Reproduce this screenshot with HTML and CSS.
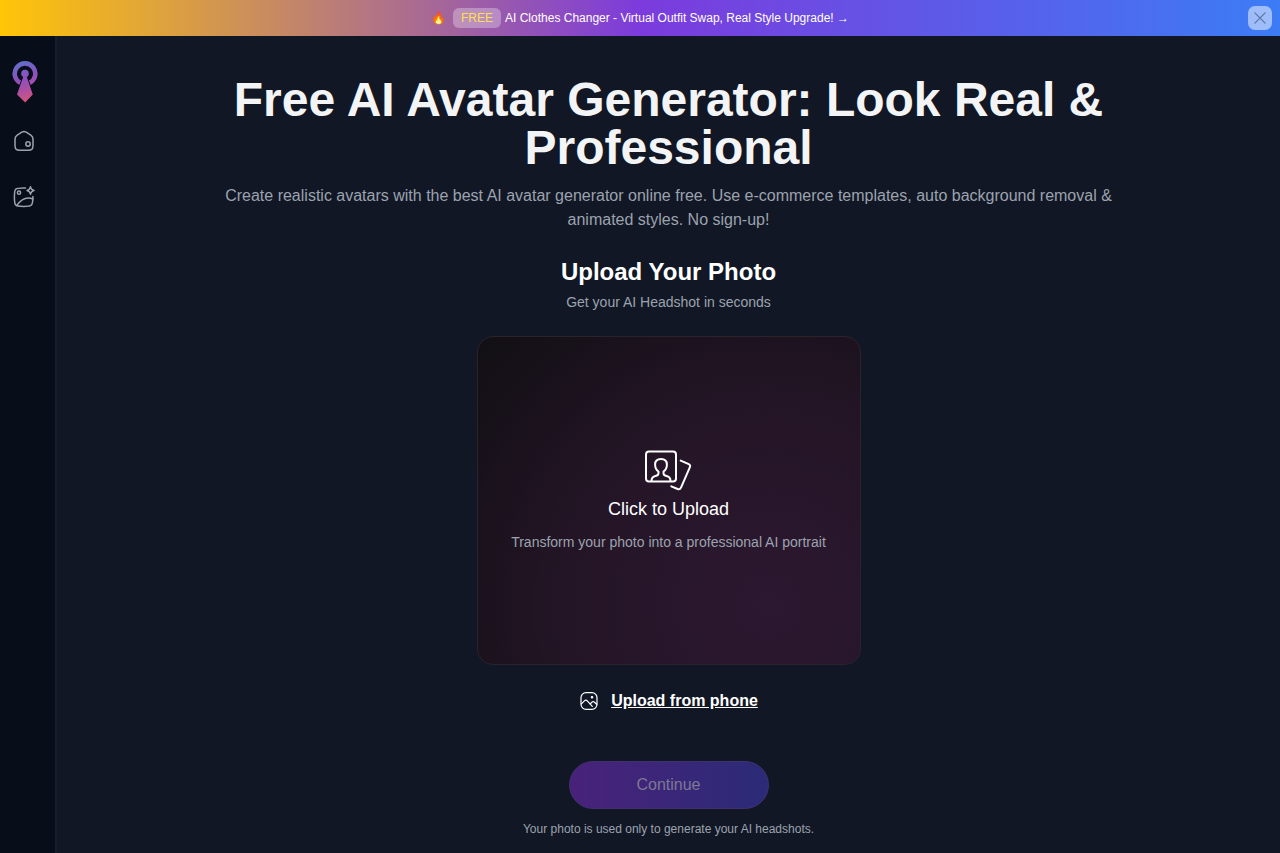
FILE: index.html
```html
<!DOCTYPE html>
<html lang="en">
<head>
<meta charset="utf-8">
<meta name="viewport" content="width=device-width, initial-scale=1">
<title>Free AI Avatar Generator</title>
<link rel="stylesheet" href="styles.css">
</head>
<body>
<div class="banner">
  <a class="banner-link" href="#clothes">
    <span class="fire">🔥</span>
    <span class="tag">FREE</span>
    <span>AI Clothes Changer - Virtual Outfit Swap, Real Style Upgrade! →</span>
  </a>
  <button class="close" type="button" aria-label="Close">
    <svg width="24" height="24" viewBox="0 0 24 24" fill="none" stroke="currentColor" stroke-width="1.3" stroke-linecap="round"><path d="M6.9 6.9l10.2 10.2M17.1 6.9L6.9 17.1"/></svg>
  </button>
</div>
<div class="shell">
  <nav class="sidebar" aria-label="Main">
    <a href="#" class="logo" aria-label="Brand">
      <svg width="28" height="42" viewBox="0 0 28 42">
        <defs><linearGradient id="brand" gradientUnits="userSpaceOnUse" x1="5" y1="2" x2="19" y2="42"><stop offset="0" stop-color="#5f70c8"/><stop offset=".4" stop-color="#8c50bf"/><stop offset=".72" stop-color="#b34f9f"/><stop offset="1" stop-color="#d8566e"/></linearGradient></defs>
        <path d="M10.400 21.900A10.300 10.300 0 1 1 19.600 21.900" fill="none" stroke="url(#brand)" stroke-width="4.600"/>
        <path d="M13.400 15.200L16.600 15.200L22.800 33.600L15.200 41.600L7 33.600Z" fill="url(#brand)" stroke="#080e19" stroke-width="1.600" paint-order="stroke"/>
        <circle cx="15" cy="12.600" r="3.800" fill="url(#brand)"/>
      </svg>
    </a>
    <a href="#home" class="nav-item" aria-label="Home">
      <svg width="24" height="24" viewBox="0 0 24 24" fill="none" stroke="currentColor" stroke-width="1.5" stroke-linejoin="round"><path d="M3 10.300C3 8 3.600 7.200 5.200 6.200L9.800 3.200C11.300 2.300 12.700 2.300 14.200 3.200L18.800 6.200C20.400 7.200 21 8 21 10.300V16C21 20.200 20 21.200 16 21.200H8C4 21.200 3 20.200 3 16Z"/><circle cx="16" cy="15" r="2.200"/></svg>
    </a>
    <a href="#images" class="nav-item" aria-label="Images">
      <svg width="24" height="24" viewBox="0 0 24 24" fill="none" stroke="currentColor" stroke-width="1.5" stroke-linecap="round" stroke-linejoin="round"><path d="M13.500 2.900H11.500C7 2.900 5 2.900 3.700 4.200C2.400 5.500 2.400 7.500 2.400 12S2.400 18.700 3.700 20C5 21.400 7 21.400 11.500 21.400S18 21.400 19.400 20C20.800 18.700 20.900 16.500 20.900 11.500"/><circle cx="7" cy="7.700" r="1.600"/><path d="M4.600 20.600C8.500 15.200 13.500 10.800 20.900 14"/><path d="M18.500 1.800c.4 2.200 1.200 3 3.500 3.700-2.300.6-3 1.400-3.500 3.700-.5-2.300-1.300-3.100-3.500-3.700 2.200-.7 3-1.500 3.500-3.700z"/></svg>
    </a>
  </nav>
  <main class="content">
    <h1>Free AI Avatar Generator: Look Real &amp; Professional</h1>
    <p class="lead">Create realistic avatars with the best AI avatar generator online free. Use e-commerce templates, auto background removal &amp; animated styles. No sign-up!</p>
    <h2>Upload Your Photo</h2>
    <p class="sub">Get your AI Headshot in seconds</p>
    <button class="dropzone" type="button">
      <svg width="48" height="42" viewBox="1 -1 48 42" fill="none" stroke="currentColor" stroke-width="2" stroke-linecap="round" stroke-linejoin="round"><rect x="2" y="1.500" width="30" height="30" rx="3"/><path d="M7.500 31c0-3.300 1-4.500 4-5.100 2.200-.4 3-1 3-2.700v-1.700c-2.300-1.500-3.400-3.900-3.400-7C11.100 11 13.300 9 17 9s5.900 2 5.900 5.500c0 3.100-1.100 5.500-3.400 7v1.700c0 1.700.8 2.300 3 2.700 3 .6 4 1.800 4 5.100"/><path d="M36.700 10.600l7.500 3.200c1.700.7 2.400 1.800 1.600 3.500l-8.700 20c-.8 1.800-1.700 2.300-3.500 1.700l-6.300-2.700"/></svg>
      <span class="drop-title">Click to Upload</span>
      <span class="drop-text">Transform your photo into a professional AI portrait</span>
    </button>
    <a class="phone" href="#phone">
      <svg width="20" height="20" viewBox="0 0 20 20" fill="none" stroke="currentColor" stroke-width="1.2" stroke-linecap="round" stroke-linejoin="round"><rect x="2" y="1.700" width="16" height="16.600" rx="5"/><path d="M2.400 12.800l3-3c1-1 2-.9 2.900.1l5 5.500M11.100 13.200l1.600-1.900c.9-1 1.900-1 2.800-.1l2.200 2.100"/><circle cx="13" cy="6.300" r=".7" fill="currentColor"/></svg>
      <span class="phone-label">Upload from phone</span>
    </a>
    <button class="continue" type="button" disabled>Continue</button>
    <p class="note">Your photo is used only to generate your AI headshots.</p>
  </main>
</div>
</body>
</html>
```
FILE: styles.css
```css
* {
  box-sizing: border-box;
}

body {
  margin: 0;
  min-height: 100vh;
  display: flex;
  flex-direction: column;
  background: #111724;
  color: #fff;
  font: 16px/24px "Liberation Sans", Arial, sans-serif;
}

h1, h2, p {
  margin: 0;
}

button {
  font: inherit;
  cursor: pointer;
}

svg {
  display: block;
  flex: none;
}

.banner {
  display: flex;
  align-items: center;
  height: 36px;
  padding: 0 8px;
  background: linear-gradient(90deg, #ffc507, #7c3bdc 50%, #3c7cf4);
}

.banner-link {
  flex: 1;
  display: flex;
  align-items: center;
  justify-content: center;
  gap: 4px;
  padding-left: 24px;
  color: #fff;
  font-size: 12px;
  line-height: 16px;
  text-decoration: none;
}

.fire {
  margin-right: 3px;
}

.tag {
  padding: 2px 8px;
  border-radius: 6px;
  background: rgba(255, 255, 255, 0.3);
  color: #fde047;
}

.close {
  width: 24px;
  height: 24px;
  padding: 0;
  border: 0;
  border-radius: 7px;
  background: rgba(255, 255, 255, 0.5);
  color: #5e76ab;
}

.shell {
  flex: 1;
  display: flex;
}

.sidebar {
  flex: none;
  display: flex;
  flex-direction: column;
  align-items: center;
  width: 57px;
  padding: 25px 8px 0 0;
  border-right: 2px solid #171d2a;
  background: #080e19;
}

.logo {
  margin-bottom: 26px;
}

.nav-item {
  margin-bottom: 32px;
  color: #9ca3af;
}

.content {
  flex: 1;
  display: flex;
  flex-direction: column;
  align-items: center;
  padding: 40px 16px 16px;
  text-align: center;
}

h1 {
  max-width: 896px;
  margin-bottom: 12px;
  color: #f3f4f6;
  font-size: 48px;
  line-height: 48px;
}

.lead {
  max-width: 896px;
  margin-bottom: 24px;
  color: #9ca3af;
}

h2 {
  margin-bottom: 4px;
  font-size: 24px;
  line-height: 32px;
}

.sub {
  margin-bottom: 24px;
  color: #9ca3af;
  font-size: 14px;
  line-height: 20px;
}

.dropzone {
  display: flex;
  flex-direction: column;
  align-items: center;
  width: 100%;
  max-width: 384px;
  padding: 112px 16px;
  border: 1px solid #29232c;
  border-radius: 16px;
  background: radial-gradient(circle at 76% 82%, #2c1831 0%, #241526 50%, #110f14 100%);
  color: #fff;
}

.drop-title {
  margin: 4px 0 9px;
  font-size: 18px;
  line-height: 28px;
}

.drop-text {
  color: #9ca3af;
  font-size: 14px;
  line-height: 20px;
}

.phone {
  display: flex;
  align-items: center;
  gap: 12px;
  margin: 24px 0 48px;
  color: #fff;
  font-weight: bold;
  text-decoration: none;
}

.phone-label {
  text-decoration: underline;
}

.continue {
  width: 200px;
  height: 48px;
  margin-bottom: 12px;
  border: 1px solid #41306f;
  border-radius: 24px;
  background: linear-gradient(90deg, #49227a, #2b2b78);
  color: #7d7893;
}

.note {
  color: #9ca3af;
  font-size: 12px;
  line-height: 16px;
}
```
